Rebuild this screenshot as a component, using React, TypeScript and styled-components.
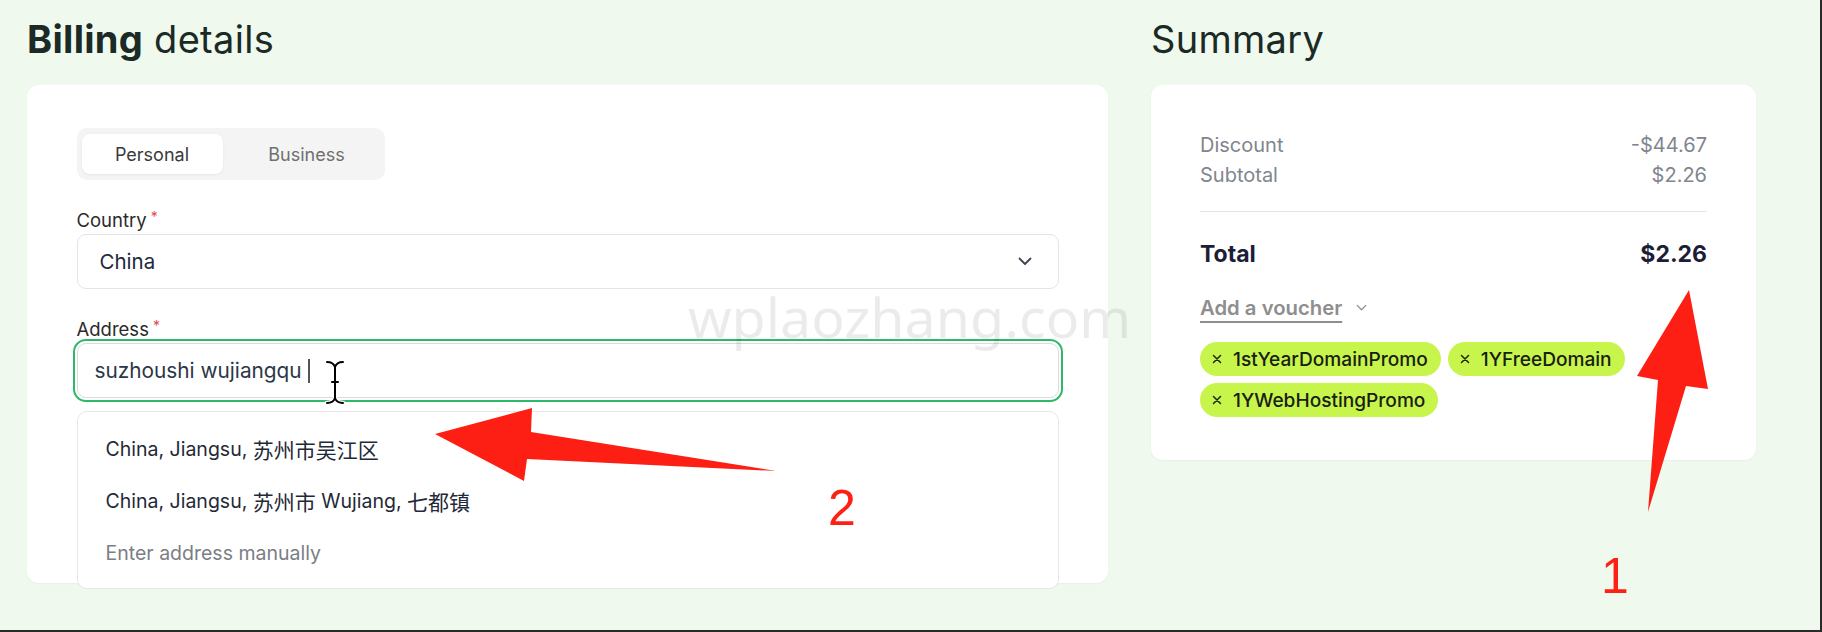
import React from 'react';
import styled, { createGlobalStyle } from 'styled-components';

const GlobalStyle = createGlobalStyle`
  html, body {
    margin: 0;
    padding: 0;
    background: #eff9ee;
  }
  body {
    font-family: Inter, "Noto Sans CJK SC", sans-serif;
    -webkit-font-smoothing: antialiased;
  }
  * {
    box-sizing: border-box;
  }
`;

const Page = styled.div`
  position: relative;
  width: 1822px;
  height: 632px;
  display: flex;
  align-items: flex-start;
  gap: 43px;
  padding: 18px 0 0 27px;
  background: #eff9ee;
  border-right: 2px solid #2a2a2a;
  border-bottom: 2px solid #2a2a2a;
  overflow: hidden;
`;

const Column = styled.section<{ $width: number }>`
  width: ${(p) => p.$width}px;
  display: flex;
  flex-direction: column;
`;

const Heading = styled.h1`
  margin: 0 0 24px;
  font-size: 38px;
  line-height: 43px;
  font-weight: 400;
  color: #1b2a25;
  letter-spacing: 0.3px;

  b {
    font-weight: 700;
  }
`;

const Card = styled.div<{ $height: number }>`
  position: relative;
  height: ${(p) => p.$height}px;
  background: #fff;
  border-radius: 12px;
  box-shadow: 0 1px 2px rgba(20, 60, 20, 0.04);
`;

const BillingCard = styled(Card)`
  padding: 43px 49.5px 0 49.5px;
`;

const Tabs = styled.div`
  display: inline-flex;
  gap: 10px;
  width: 308px;
  height: 52px;
  padding: 6px 4px 6px 5px;
  background: #f4f4f4;
  border-radius: 10px;
  margin-bottom: 28px;
`;

const Tab = styled.div<{ $active?: boolean; $width: number }>`
  width: ${(p) => p.$width}px;
  display: flex;
  align-items: center;
  justify-content: center;
  border-radius: 8px;
  font-size: 18px;
  color: ${(p) => (p.$active ? '#393939' : '#6f6f6f')};
  background: ${(p) => (p.$active ? '#fff' : 'transparent')};
  box-shadow: ${(p) => (p.$active ? '0 1px 3px rgba(0,0,0,0.06)' : 'none')};
`;

const Field = styled.div`
  position: relative;
  & + & {
    margin-top: 28px;
  }
`;

const Label = styled.div`
  font-size: 18.5px;
  line-height: 24px;
  color: #2b2b2b;
  margin-bottom: 2px;
`;

const Required = styled.span`
  color: #e5484d;
  font-size: 14px;
  vertical-align: top;
  margin-left: 4px;
  line-height: 18px;
`;

const SelectBox = styled.div`
  height: 55px;
  display: flex;
  align-items: center;
  justify-content: space-between;
  padding: 0 26px 0 22px;
  border: 1px solid #e4e4e4;
  border-radius: 9px;
  font-size: 20.5px;
  color: #1e2a3b;
`;

const InputBox = styled.div`
  height: 55px;
  margin-top: 2px;
  display: flex;
  align-items: center;
  padding: 0 17px;
  border: 1px solid #d9dcdc;
  border-radius: 9px;
  outline: 2.5px solid #2db86a;
  outline-offset: 2px;
  font-size: 20.8px;
  color: #2b3646;
`;

const Caret = styled.span`
  display: inline-block;
  width: 2px;
  height: 24px;
  margin-left: 6px;
  background: #555;
`;

const Suggestions = styled.ul`
  position: absolute;
  left: 0;
  right: 0;
  top: calc(100% + 13px);
  height: 178px;
  margin: 0;
  padding: 11px 0;
  list-style: none;
  background: #fff;
  border: 1px solid #e5e7e9;
  border-radius: 10px;
  z-index: 2;
`;

const Suggestion = styled.li<{ $muted?: boolean }>`
  height: 52px;
  display: flex;
  align-items: center;
  padding-left: 28px;
  font-size: 19.5px;
  color: ${(p) => (p.$muted ? '#7a7e85' : '#1f2937')};
`;

const Cjk = styled.span`
  font-size: 21px;
`;

const SummaryCard = styled(Card)`
  padding: 45px 49px 0 49px;
`;

const Row = styled.div`
  display: flex;
  justify-content: space-between;
  font-size: 20px;
  line-height: 30px;
  color: #80868e;
`;

const Divider = styled.hr`
  margin: 21px 0 0;
  border: none;
  border-top: 1px solid #e3e5e8;
`;

const TotalRow = styled(Row)`
  margin-top: 26px;
  font-size: 23px;
  line-height: 32px;
  font-weight: 700;
  color: #1b1e36;
`;

const Voucher = styled.div`
  margin-top: 25px;
  display: flex;
  align-items: center;
  gap: 14px;
  font-size: 20.3px;
  line-height: 26px;
  font-weight: 600;
  color: #8e8e8e;

  span {
    text-decoration: underline;
    text-decoration-thickness: 2px;
    text-underline-offset: 6px;
  }
`;

const Chips = styled.div`
  margin-top: 21px;
  display: flex;
  flex-wrap: wrap;
  gap: 7px;
`;

const Chip = styled.div`
  height: 34px;
  display: inline-flex;
  align-items: center;
  gap: 11px;
  padding: 0 13px 0 12px;
  border-radius: 17px;
  background: #c8f54b;
  font-size: 19.1px;
  font-weight: 500;
  color: #172012;
`;

const Watermark = styled.div`
  position: absolute;
  left: 688px;
  top: 284px;
  font-family: "Noto Sans", sans-serif;
  font-size: 55.5px;
  line-height: 66px;
  color: rgba(0, 0, 0, 0.08);
  pointer-events: none;
  z-index: 3;
`;

const Marker = styled.div<{ $x: number; $y: number }>`
  position: absolute;
  left: ${(p) => p.$x}px;
  top: ${(p) => p.$y}px;
  font-family: "Liberation Sans", Arial, sans-serif;
  font-size: 50px;
  line-height: 50px;
  color: #fe2015;
  z-index: 4;
`;

const Overlay = styled.svg`
  position: absolute;
  left: 0;
  top: 0;
  pointer-events: none;
  z-index: 4;
`;

function Chevron({ color, w, sw }: { color: string; w: number; sw: number }) {
  return (
    <svg width={w} height={w / 2 + 2} viewBox="0 0 14 9" fill="none">
      <path d="M1.5 1.5l5.5 5.5 5.5-5.5" stroke={color} strokeWidth={sw} strokeLinecap="round" strokeLinejoin="round" />
    </svg>
  );
}

function Cross() {
  return (
    <svg width="10" height="10" viewBox="0 0 10 10">
      <path d="M1.5 1.5l7 7M8.5 1.5l-7 7" stroke="#1d2614" strokeWidth="1.5" strokeLinecap="round" />
    </svg>
  );
}

const promos = ['1stYearDomainPromo', '1YFreeDomain', '1YWebHostingPromo'];

export default function App() {
  return (
    <>
      <GlobalStyle />
      <Page>
        <Column $width={1081}>
          <Heading>
            <b>Billing</b> details
          </Heading>
          <BillingCard $height={498}>
            <Tabs>
              <Tab $active $width={141}>Personal</Tab>
              <Tab $width={148}>Business</Tab>
            </Tabs>
            <Field>
              <Label>
                Country<Required>*</Required>
              </Label>
              <SelectBox>
                China
                <Chevron color="#3b4554" w={14} sw={1.8} />
              </SelectBox>
            </Field>
            <Field>
              <Label>
                Address<Required>*</Required>
              </Label>
              <InputBox>
                suzhoushi wujiangqu
                <Caret />
              </InputBox>
              <Suggestions>
                <Suggestion>
                  China, Jiangsu,&nbsp;<Cjk>苏州市吴江区</Cjk>
                </Suggestion>
                <Suggestion>
                  China, Jiangsu,&nbsp;<Cjk>苏州市</Cjk>&nbsp;Wujiang,&nbsp;<Cjk>七都镇</Cjk>
                </Suggestion>
                <Suggestion $muted>Enter address manually</Suggestion>
              </Suggestions>
            </Field>
          </BillingCard>
        </Column>

        <Column $width={605}>
          <Heading>Summary</Heading>
          <SummaryCard $height={375}>
            <Row>
              <span>Discount</span>
              <span>-$44.67</span>
            </Row>
            <Row>
              <span>Subtotal</span>
              <span>$2.26</span>
            </Row>
            <Divider />
            <TotalRow>
              <span>Total</span>
              <span>$2.26</span>
            </TotalRow>
            <Voucher>
              <span>Add a voucher</span>
              <Chevron color="#8e8e8e" w={11} sw={1.6} />
            </Voucher>
            <Chips>
              {promos.map((p) => (
                <Chip key={p}>
                  <Cross />
                  {p}
                </Chip>
              ))}
            </Chips>
          </SummaryCard>
        </Column>

        <Watermark>wplaozhang.com</Watermark>
        <Marker $x={828} $y={483}>2</Marker>
        <Marker $x={1601} $y={551}>1</Marker>

        <Overlay width="1822" height="632" viewBox="0 0 1822 632">
          <polygon
            points="435,434 532,408 531,432 776,471 527,459 524,481"
            fill="#fe1f14"
          />
          <polygon
            points="1689,290 1708,389 1686,386 1648,512 1658,380 1637,376"
            fill="#fe1f14"
          />
          <g fill="none" strokeLinecap="round" strokeLinejoin="round">
            <path
              d="M327 362c4 0 7 2 8 5M343 362c-4 0-7 2-8 5M335 367v31M332 382h6M327 403c4 0 7-2 8-5M343 403c-4 0-7-2-8-5"
              stroke="#fff"
              strokeWidth="4.5"
            />
            <path
              d="M327 362c4 0 7 2 8 5M343 362c-4 0-7 2-8 5M335 367v31M332 382h6M327 403c4 0 7-2 8-5M343 403c-4 0-7-2-8-5"
              stroke="#000"
              strokeWidth="2"
            />
          </g>
        </Overlay>
      </Page>
    </>
  );
}
